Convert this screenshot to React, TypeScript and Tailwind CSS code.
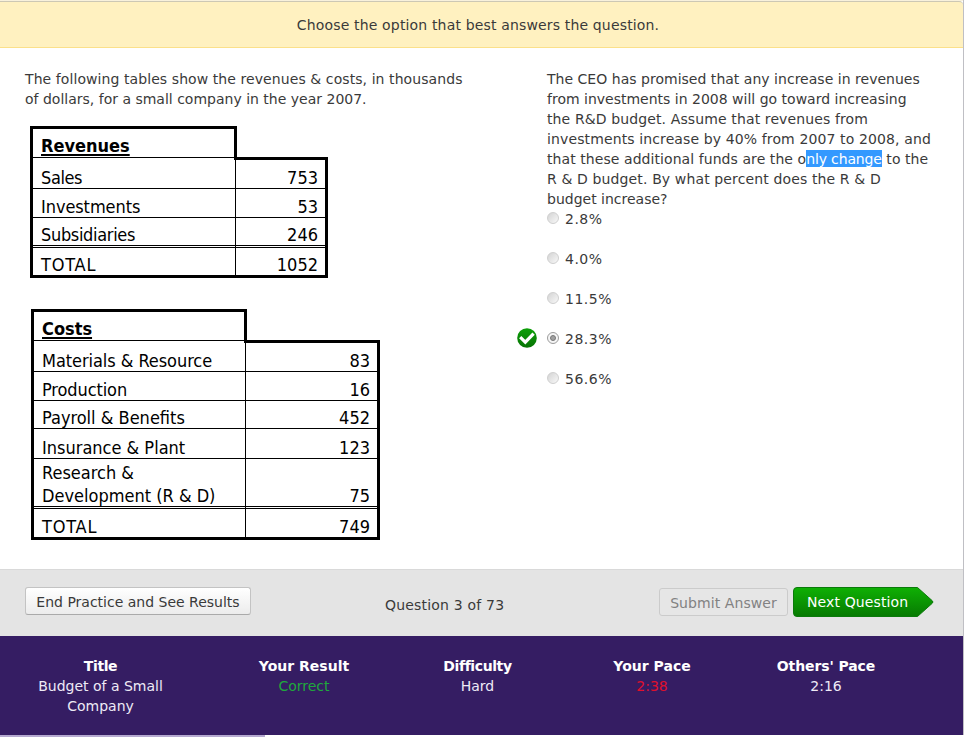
import React from "react";

type Row = {
  label: React.ReactNode;
  value: string;
  height: string;
  tracking?: string;
};

const revenues: Row[] = [
  { label: "Sales", value: "753", height: "h-[31px]", tracking: "tracking-[-0.4px]" },
  { label: "Investments", value: "53", height: "h-[29px]", tracking: "tracking-[-0.08px]" },
  { label: "Subsidiaries", value: "246", height: "h-[28px]", tracking: "tracking-[-0.33px]" },
  { label: "TOTAL", value: "1052", height: "h-[33px]", tracking: "tracking-[0.8px]" },
];

const costs: Row[] = [
  { label: "Materials & Resource", value: "83", height: "h-[31px]", tracking: "tracking-[-0.06px]" },
  { label: "Production", value: "16", height: "h-[29px]", tracking: "tracking-[-0.1px]" },
  { label: "Payroll & Benefits", value: "452", height: "h-[28px]" },
  { label: "Insurance & Plant", value: "123", height: "h-[30px]" },
  {
    label: (
      <>
        Research &amp;
        <br />
        Development (R &amp; D)
      </>
    ),
    value: "75",
    height: "h-[48px]",
  },
  { label: "TOTAL", value: "749", height: "h-[34px]", tracking: "tracking-[0.8px]" },
];

function Ledger({
  title,
  rows,
  width,
  headWidth,
  labelWidth,
}: {
  title: string;
  rows: Row[];
  width: string;
  headWidth: string;
  labelWidth: string;
}) {
  return (
    <div
      className={`flex flex-col text-[18px] leading-[23px] text-black [font-family:'DejaVu_Sans_Condensed','DejaVu_Sans',sans-serif] [font-stretch:condensed] ${width}`}
    >
      <div
        className={`-mb-[3px] flex h-[34px] items-end border-x-[3px] border-t-[3px] border-black pb-[3px] pl-2 font-bold underline decoration-2 underline-offset-2 ${headWidth}`}
      >
        {title}
      </div>
      {rows.map((row, i) => {
        const last = i === rows.length - 1;
        const top = last ? "border-t-[3px] [border-top-style:double]" : "border-t";
        const rightTop = i === 0 ? "border-t-[3px]" : top;
        const bottom = last ? "border-b-[3px]" : "";
        return (
          <div key={i} className={`flex border-x-[3px] border-black ${row.height} ${bottom}`}>
            <div
              className={`flex shrink-0 items-end border-black pl-2 whitespace-nowrap ${labelWidth} ${top} ${row.tracking ?? ""}`}
            >
              <span className="-mb-px">{row.label}</span>
            </div>
            <div
              className={`flex grow items-end justify-end border-l border-black pr-[7px] ${rightTop}`}
            >
              <span className="-mb-px">{row.value}</span>
            </div>
          </div>
        );
      })}
    </div>
  );
}

function CheckBadge() {
  return (
    <svg className="h-5 w-5" viewBox="0 0 20 20">
      <defs>
        <linearGradient id="badge" x1="0" y1="0" x2="0" y2="1">
          <stop offset="0" stopColor="#0ca008" />
          <stop offset="1" stopColor="#077305" />
        </linearGradient>
      </defs>
      <circle cx="10" cy="10" r="9.8" fill="url(#badge)" />
      <path d="M3.2 9.2 8.3 14.200 16.600 5.700" fill="none" stroke="#fff" strokeWidth="3.2" />
    </svg>
  );
}

function Radio({ checked }: { checked: boolean }) {
  return (
    <span
      className={`flex h-3 w-3 items-center justify-center rounded-full border ${
        checked ? "border-[#9c9c9c] bg-[#f5f5f5]" : "border-[#cfcfcf] bg-linear-to-br from-[#d4d4d4] to-[#f8f8f8]"
      }`}
    >
      {checked && <span className="h-[6px] w-[6px] rounded-full border border-[#777] bg-[#a0a0a0]" />}
    </span>
  );
}

const answers = ["2.8%", "4.0%", "11.5%", "28.3%", "56.6%"];

const stats = [
  { title: "Title", value: "Budget of a Small Company", color: "text-[#eeeaf6]", width: "w-[201px]", tracking: "tracking-[-0.4px]" },
  { title: "Your Result", value: "Correct", color: "text-[#1fa83c]", width: "w-[206px]", tracking: "" },
  { title: "Difficulty", value: "Hard", color: "text-[#eeeaf6]", width: "w-[141px]", tracking: "tracking-[-0.4px]" },
  { title: "Your Pace", value: "2:38", color: "text-[#e0102c]", width: "w-[208px]", tracking: "" },
  { title: "Others' Pace", value: "2:16", color: "text-[#eeeaf6]", width: "w-[140px]", tracking: "tracking-[-0.1px]" },
];

export default function App() {
  return (
    <div className="flex h-[737px] w-[965px] flex-col overflow-hidden bg-white text-[14px] leading-5 text-[#3a3a3a] [font-family:'DejaVu_Sans',Verdana,sans-serif]">
      <div className="flex h-[735px] w-[964px] shrink-0 flex-col border-r border-[#bfbfc4]">
        <div className="h-px shrink-0 bg-[#f8f1dc]" />
        <header className="flex h-[47px] shrink-0 items-center justify-center rounded-tr border-t border-b border-t-[#cdc8b4] border-b-[#fbe08a] bg-[#fff1c0] pr-[7px] tracking-[0.16px]">
          Choose the option that best answers the question.
        </header>

        <main className="flex h-[521px] shrink-0">
          <section className="w-[517px] shrink-0 pt-[21px] pl-[25px]">
            <p className="whitespace-nowrap">
              <span className="tracking-[0.08px]">The following tables show the revenues &amp; costs, in thousands</span>
              <br />
              of dollars, for a small company in the year 2007.
            </p>
            <div className="mt-[17px] ml-[5px]">
              <Ledger
                title="Revenues"
                rows={revenues}
                width="w-[298px]"
                headWidth="w-[207px]"
                labelWidth="w-[202px]"
              />
            </div>
            <div className="mt-[31px] ml-[6px]">
              <Ledger
                title="Costs"
                rows={costs}
                width="w-[349px]"
                headWidth="w-[216px]"
                labelWidth="w-[211px]"
              />
            </div>
          </section>

          <section className="pt-[21px]">
            <p className="pl-[30px] whitespace-nowrap">
              <span className="tracking-[0.02px]">The CEO has promised that any increase in revenues</span>
              <br />
              from investments in 2008 will go toward increasing
              <br />
              <span className="tracking-[0.12px]">the R&amp;D budget. Assume that revenues from</span>
              <br />
              <span className="tracking-[0.12px]">investments increase by 40% from 2007 to 2008, and</span>
              <br />
              <span className="tracking-[0.07px]">
                that these additional funds are the o
                <span className="bg-[#3399ff] pt-px tracking-[-0.14px] text-white">nly change</span> to the
              </span>
              <br />
              <span className="tracking-[0.13px]">R &amp; D budget. By what percent does the R &amp; D</span>
              <br />
              budget increase?
            </p>
            <ul className="flex flex-col gap-5">
              {answers.map((a) => (
                <li key={a} className="flex h-5 items-center">
                  <span className="mb-[2px] w-[30px]">{a === "28.3%" && <CheckBadge />}</span>
                  <span className="mb-[2px]">
                    <Radio checked={a === "28.3%"} />
                  </span>
                  <span className="ml-[6px] tracking-[0.5px]">{a}</span>
                </li>
              ))}
            </ul>
          </section>
        </main>

        <div className="flex h-[67px] shrink-0 items-start border-t border-[#d9d9d9] bg-[#e4e4e4] pl-[25px]">
          <button className="mt-[17px] flex h-[28px] w-[226px] justify-center rounded-[3px] border border-[#c3c3c3] border-b-[#aaa] bg-linear-to-b from-white to-[#ececec] pt-1 whitespace-nowrap">
            End Practice and See Results
          </button>
          <span className="mt-[25px] ml-[134px] w-[274px] tracking-[0.19px] whitespace-nowrap">Question 3 of 73</span>
          <button className="mt-[18px] flex h-[28px] w-[129px] justify-center rounded-[3px] border border-[#cbcbcb] bg-[#e6e6e6] pt-1 tracking-[0.08px] whitespace-nowrap text-[#828282]">
            Submit Answer
          </button>
          <button className="relative mt-[17px] ml-[5px] h-[30px] w-[141px] text-white">
            <svg className="absolute inset-0 h-[30px] w-[141px]" viewBox="0 0 141 30">
              <defs>
                <linearGradient id="go" x1="0" y1="0" x2="0" y2="1">
                  <stop offset="0" stopColor="#0fb004" />
                  <stop offset="1" stopColor="#077a02" />
                </linearGradient>
              </defs>
              <path
                d="M4 .5H124.500L139 13.500Q141 15 139 16.500L124.500 29.500H4Q.5 29.500 .5 26V4Q.5 .5 4 .5Z"
                fill="url(#go)"
                stroke="#0b7a0b"
              />
            </svg>
            <span className="relative flex pl-[14px] tracking-[0.12px] whitespace-nowrap">Next Question</span>
          </button>
        </div>

        <footer className="flex h-[99px] shrink-0 bg-[#351d63] pt-[20px]">
          {stats.map((s) => (
            <div key={s.title} className={`flex shrink-0 flex-col items-center text-center ${s.width}`}>
              <span className={`font-bold whitespace-nowrap text-white ${s.tracking}`}>{s.title}</span>
              <span className={`max-w-[140px] ${s.color}`}>{s.value}</span>
            </div>
          ))}
        </footer>
      </div>
      <div className="h-[2px] w-[265px] bg-[#b5a9d0]" />
    </div>
  );
}
